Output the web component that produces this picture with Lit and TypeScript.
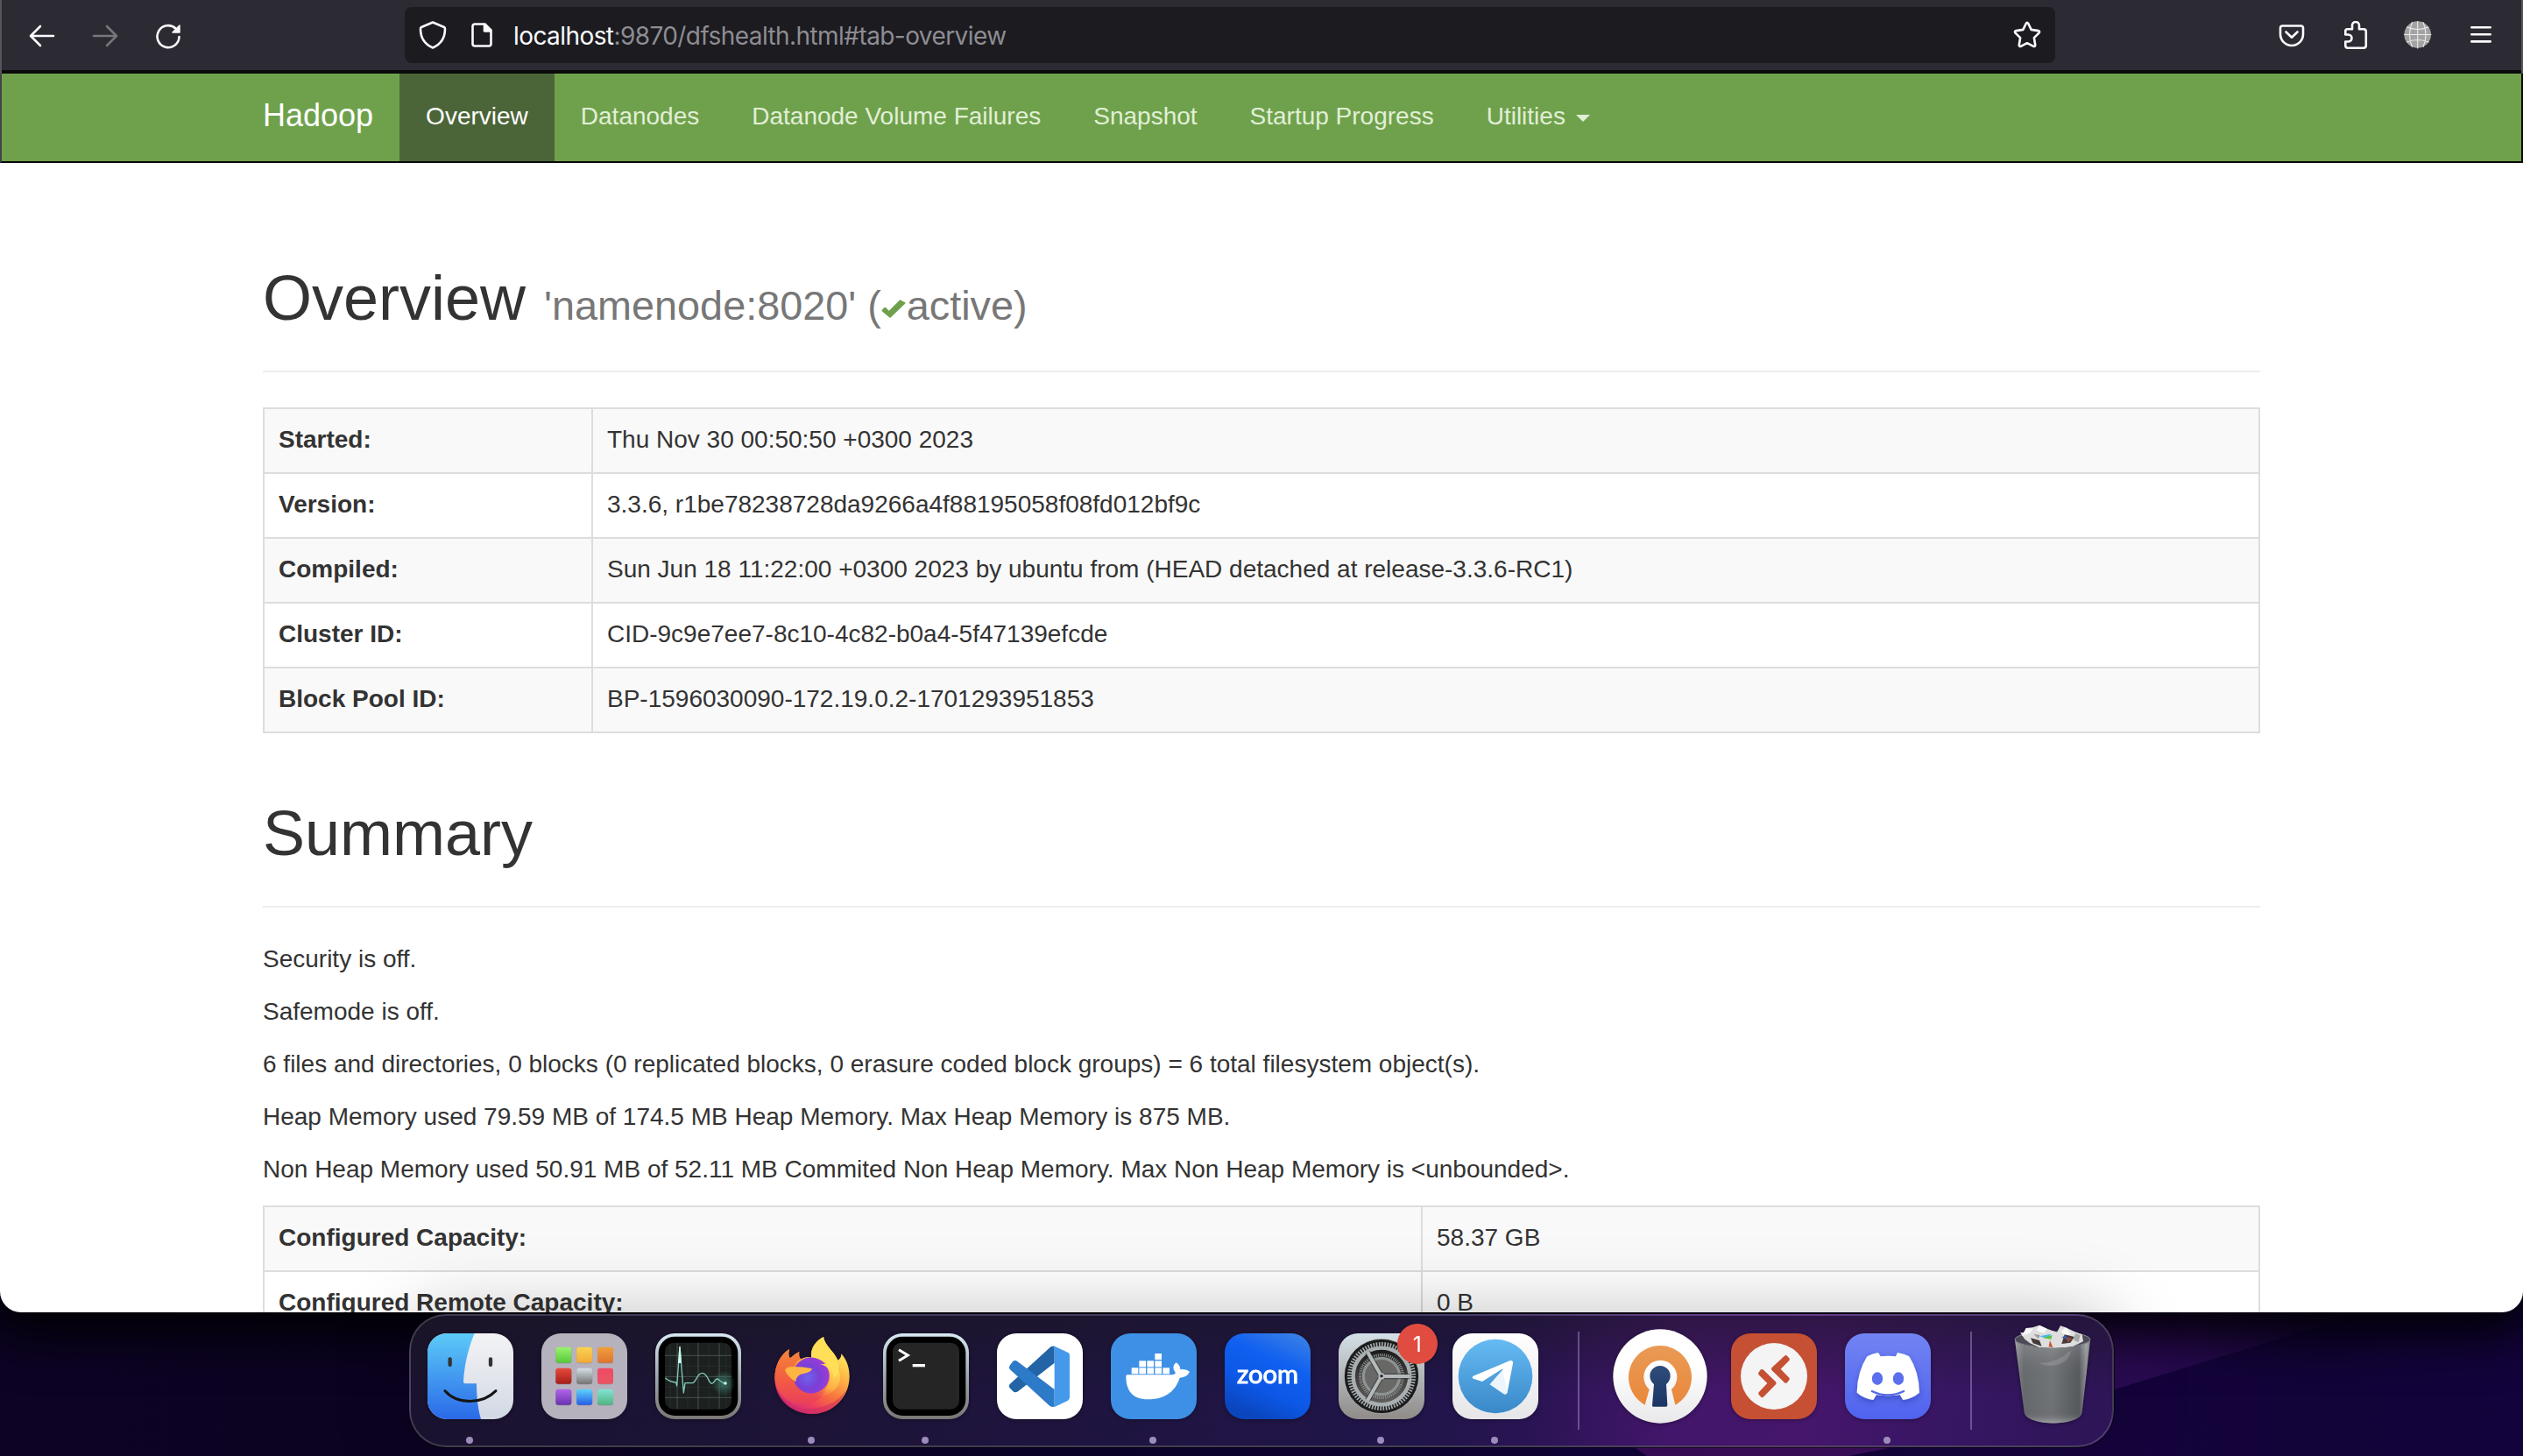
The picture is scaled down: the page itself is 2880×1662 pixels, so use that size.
import { LitElement, html, svg, css } from "lit";
import { customElement, property } from "lit/decorators.js";

const squircle = (fill: string) =>
  svg`<rect x="48" y="60" width="294" height="294" rx="66" fill=${fill} />`;

const glassFrame = (id: string, screen: string) => svg`
  <defs>
    <linearGradient id=${id} x1="0" y1="0" x2="0" y2="1">
      <stop offset="0" stop-color="#d6e8f1" />
      <stop offset="0.5" stop-color="#9fa9b0" />
      <stop offset="1" stop-color="#7b7674" />
    </linearGradient>
  </defs>
  ${squircle(`url(#${id})`)}
  <rect x="59" y="71" width="272" height="271" rx="56" fill="#000" />
  <rect x="81" y="92" width="228" height="228" rx="30" fill=${screen} />`;

const finder = svg`
  <defs>
    <linearGradient id="fb" x1="0" y1="0" x2="0" y2="1"><stop offset="0" stop-color="#5ccbf8" /><stop offset="1" stop-color="#2a69e8" /></linearGradient>
    <linearGradient id="fw" x1="0" y1="0" x2="0" y2="1"><stop offset="0" stop-color="#f3f3f5" /><stop offset="1" stop-color="#d2d9e4" /></linearGradient>
    <clipPath id="fc"><rect x="48" y="60" width="294" height="294" rx="66" /></clipPath>
  </defs>
  <g clip-path="url(#fc)">
    <rect x="48" y="60" width="294" height="294" fill="url(#fw)" />
    <path d="M209 60 C184 118 173 180 171 226 Q171 232 177 232 H216 C216 275 221 320 231 354 H48 V60Z" fill="url(#fb)" />
  </g>
  <path d="M125 148 V168 M264 148 V168" stroke="#333" stroke-width="13" stroke-linecap="round" />
  <path d="M108 257 C150 304 236 304 282 257" fill="none" stroke="#151515" stroke-width="9" stroke-linecap="round" />`;

const padColors = [
  ["#9bf36f", "#56c93a"], ["#f9d350", "#f2a93a"], ["#f0a03c", "#de7430"],
  ["#e94a3c", "#a51f17"], ["#d4e0e6", "#747474"], ["#ee4a63", "#ea5563"],
  ["#b364e8", "#6a34b0"], ["#5fd3fb", "#235fe6"], ["#84e3d4", "#50b583"],
];
const launchpad = svg`
  ${squircle("#b5b2be")}
  ${padColors.map(([a, b], i) => svg`
    <linearGradient id=${"lp" + i} x1="0" y1="0" x2="0" y2="1"><stop offset="0" stop-color=${a} /><stop offset="1" stop-color=${b} /></linearGradient>
    <rect x=${97 + (i % 3) * 71.5} y=${109 + Math.floor(i / 3) * 72} width="54" height="54" rx="9" fill="#000" opacity="0.25" />
    <rect x=${97 + (i % 3) * 71.5} y=${107 + Math.floor(i / 3) * 72} width="54" height="54" rx="9" fill=${`url(#lp${i})`} />`)}`;

const activity = svg`
  ${glassFrame("ag", "#1c201f")}
  <defs><radialGradient id="aw"><stop offset="0" stop-color="#3f8a78" stop-opacity="0.75" /><stop offset="1" stop-color="#3f8a78" stop-opacity="0" /></radialGradient></defs>
  <path d="M123 94 V318 M195 92 V320 M267 94 V318 M81 136 H309 M81 208 H309 M81 280 H309" stroke="#48565300" fill="none" />
  <path d="M123 94 V318 M195 92 V320 M267 94 V318 M81 136 H309 M81 208 H309 M81 280 H309" stroke="#4e5d5a" stroke-width="2.5" fill="none" />
  <path d="M159 92 V320 M231 92 V320 M81 172 H309 M81 244 H309 M99 96 V316 M291 96 V316" stroke="#2c3634" stroke-width="2" fill="none" />
  <ellipse cx="282" cy="231" rx="40" ry="44" fill="url(#aw)" />
  <path d="M82 212 Q96 226 119 228 L122 240 L132 106 L145 264 L150 230 H176 C190 226 190 196 209 196 C228 196 230 232 242 232 C250 232 252 216 260 216 C270 218 272 231 288 231" fill="none" stroke="#7fc9b8" stroke-width="4" stroke-linejoin="round" />
  <path d="M128 160 L132 106 L136 160Z" fill="#dffff6" stroke="#c9f5ea" stroke-width="4" />
  <circle cx="288" cy="231" r="5" fill="#d9f7ef" />`;

const firefox = svg`
  <defs>
    <linearGradient id="ff1" x1="0.85" y1="0.05" x2="0.3" y2="1"><stop offset="0.1" stop-color="#ffe95c" /><stop offset="0.38" stop-color="#fdb044" /><stop offset="0.62" stop-color="#f9703f" /><stop offset="0.82" stop-color="#ee3f5d" /><stop offset="1" stop-color="#cf2a80" /></linearGradient>
    <radialGradient id="ff2" cx="0.4" cy="0.55" r="0.65"><stop offset="0" stop-color="#6f63ee" /><stop offset="0.5" stop-color="#7a3fd6" /><stop offset="1" stop-color="#a33ad8" /></radialGradient>
    <linearGradient id="ff3" x1="0.8" y1="0" x2="0.3" y2="1"><stop offset="0" stop-color="#ffe25a" /><stop offset="0.6" stop-color="#fdae45" /><stop offset="1" stop-color="#f5604a" stop-opacity="0" /></linearGradient>
    <linearGradient id="ff4" x1="0" y1="0" x2="0" y2="1"><stop offset="0" stop-color="#f5863b" /><stop offset="0.5" stop-color="#f3603f" /><stop offset="1" stop-color="#e93f5b" /></linearGradient>
  </defs>
  <path d="M117 114 C113 130 115 138 120 145 Q136 130 151 123 Q148 138 156 148 C172 140 184 140 192 142 C189 108 210 84 234 72 C238 102 268 118 284 152 Q298 140 294 129 C315 150 323 180 323 207 C323 280 265 336 194 336 C124 336 67 282 67 214 C67 170 85 135 117 114Z" fill="url(#ff1)" />
  <path d="M117 114 C113 130 115 138 120 145 Q136 130 151 123 Q148 138 156 148 C130 160 124 190 139 222 C150 270 210 280 244 250 C232 292 176 312 134 300 C96 288 70 252 67 214 C67 170 85 135 117 114Z" fill="url(#ff4)" />
  <path d="M67 218 C72 275 120 318 180 318 C235 318 285 296 310 256 C292 306 246 336 194 336 C124 336 68 286 67 218Z" fill="#c72a5f" opacity="0.5" />
  <circle cx="192" cy="204" r="62" fill="url(#ff2)" />
  <path d="M222 166 Q240 168 250 182 Q262 206 252 232 C238 268 194 286 150 262 C200 296 280 276 290 220 C296 186 276 160 222 166Z" fill="url(#ff3)" />
  <path d="M102 186 Q108 172 134 174 Q160 174 195 181 Q192 194 166 198 Q140 202 139 226 Q112 210 102 186Z" fill="#fdb543" />
  <path d="M192 142 C189 108 210 84 234 72 C238 102 268 118 282 154 C290 180 286 200 270 214 C268 180 244 150 192 142Z" fill="#ffdf58" />`;

const terminal = svg`
  ${glassFrame("tg", "#252525")}
  <path d="M102 116 L133 135 L102 154" fill="none" stroke="#fff" stroke-width="9" />
  <rect x="149" y="165" width="43" height="10" fill="#fff" />`;

const vscode = svg`
  ${squircle("#fff")}
  <path d="M239 104 H245 V161 L120 259 Q109 265 102 257 L91 246 Q87 240 92 234 L230 108 Q234 104 239 104Z" fill="#2264a5" />
  <path d="M92 170 L102 157 Q109 150 118 156 L245 252 V310 Q235 315 226 306 L92 183 Q87 177 92 170Z" fill="#2d7ac8" />
  <path d="M239 104 Q243 103 247 105 L292 126 Q297 129 297 136 V279 Q297 287 291 290 L247 311 Q243 312 239 311 Q245 308 245 301 V114 Q245 107 239 104Z" fill="#4499ea" />`;

const crates = [[119, 178], [145, 178], [172, 178], [199, 178], [226, 178], [145, 154], [172, 154], [199, 154], [199, 129]];
const docker = svg`
  ${squircle("#3d90e6")}
  ${crates.map(([x, y]) => svg`<rect x=${x} y=${y} width="23" height="21" fill="#fff" />`)}
  <path d="M104 202 H258 Q266 202 270 195 Q260 184 263 172 Q265 164 272 160 Q286 170 286 184 Q304 180 318 191 Q310 210 284 212 C268 262 230 286 174 286 C122 286 100 256 100 208 Q100 202 104 202Z" fill="#fff" />`;

const zoom = svg`
  <defs><linearGradient id="zg" x1="0.85" y1="0" x2="0.4" y2="1"><stop offset="0" stop-color="#3a80e6" /><stop offset="0.35" stop-color="#1160f0" /><stop offset="0.7" stop-color="#0c57e6" /><stop offset="1" stop-color="#0a46bd" /></linearGradient></defs>
  ${squircle("url(#zg)")}
  <text x="90" y="230" font-family="Lato, sans-serif" font-weight="400" font-size="88" fill="#fff" stroke="#fff" stroke-width="3" textLength="210" lengthAdjust="spacingAndGlyphs">zoom</text>`;

const settings = svg`
  <defs>
    <linearGradient id="sg" x1="0" y1="0" x2="0" y2="1"><stop offset="0" stop-color="#d5e0e8" /><stop offset="1" stop-color="#8f8b88" /></linearGradient>
    <linearGradient id="si" x1="0" y1="0" x2="0" y2="1"><stop offset="0" stop-color="#181818" /><stop offset="1" stop-color="#63615f" /></linearGradient>
  </defs>
  ${squircle("url(#sg)")}
  <circle cx="195" cy="207" r="128" fill="#1b1c1c" stroke="#c9ced0" stroke-width="2" />
  <circle cx="195" cy="207" r="109" fill="none" stroke="#a6abad" stroke-width="16" stroke-dasharray="5 4.5" />
  <circle cx="195" cy="207" r="97" fill="url(#si)" stroke="#a9afb1" stroke-width="13" />
  <circle cx="195" cy="207" r="73" fill="none" stroke="#8b8f90" stroke-width="10" stroke-dasharray="3.5 3.5" />
  <circle cx="195" cy="207" r="62" fill="#686867" stroke="#8e9292" stroke-width="10" />
  <path d="M195 207 H292 M195 207 L147 124 M195 207 L147 290" stroke="#2a2a2a" stroke-width="19" opacity="0.55" />
  <path d="M195 207 H292 M195 207 L147 124 M195 207 L147 290" stroke="#b4babc" stroke-width="12" />
  <circle cx="195" cy="207" r="11" fill="#b4babc" />
  <circle cx="195" cy="206" r="5" fill="#222" />
  <circle cx="318" cy="96" r="69" fill="#e14c40" />
  <text x="317" y="122" text-anchor="middle" font-family="Inter, sans-serif" font-size="74" fill="#fff">1</text>`;

const telegram = svg`
  <defs>
    <linearGradient id="tw" x1="0" y1="0" x2="0" y2="1"><stop offset="0" stop-color="#fff" /><stop offset="1" stop-color="#e6e6e8" /></linearGradient>
    <linearGradient id="tb" x1="0" y1="0" x2="0" y2="1"><stop offset="0" stop-color="#66bbf3" /><stop offset="1" stop-color="#3988c8" /></linearGradient>
  </defs>
  ${squircle("url(#tw)")}
  <circle cx="195" cy="207" r="127" fill="url(#tb)" />
  <path d="M119 206 L244 154 Q256 150 255 163 L236 262 Q233 272 223 267 L176 235 L219 186 Q223 180 215 184 L150 225 L119 215 Q113 210 119 206Z" fill="#fff" />
  <path d="M176 235 L219 186 L236 262 Q233 272 223 267Z" fill="#dfeefa" opacity="0.6" />`;

const openvpn = svg`
  <defs>
    <linearGradient id="ow" x1="0" y1="0" x2="0" y2="1"><stop offset="0.4" stop-color="#fff" /><stop offset="1" stop-color="#e8e8ea" /></linearGradient>
    <linearGradient id="oo" x1="0" y1="0" x2="0" y2="1"><stop offset="0" stop-color="#e99a55" /><stop offset="1" stop-color="#ea883c" /></linearGradient>
    <linearGradient id="ob" x1="0" y1="0" x2="0" y2="1"><stop offset="0" stop-color="#2f4c7a" /><stop offset="1" stop-color="#1b3665" /></linearGradient>
  </defs>
  <circle cx="195" cy="207" r="161" fill="url(#ow)" />
  <path d="M143 305 A108 108 0 1 1 247 305 L234 252 A57 57 0 1 0 158 252Z" fill="url(#oo)" />
  <path d="M174 234 A35 35 0 1 1 216 234 L220 307 Q220 311 215 311 H172 Q167 311 168 307Z" fill="url(#ob)" />`;

const remoteDesktop = svg`
  ${squircle("#c55033")}
  <circle cx="195" cy="207" r="114" fill="#f4f4f4" />
  <path d="M142 201 Q140 197 143 193 L150 184 Q155 181 159 185 L201 226 Q205 231 201 235 L160 277 Q155 282 151 278 L143 270 Q140 266 143 262 L172 231Z" fill="#c55033" />
  <path d="M247 153 Q250 149 247 145 L240 137 Q236 133 231 137 L188 177 Q184 182 188 187 L231 229 Q236 232 240 229 L247 220 Q250 216 247 212 L218 182Z" fill="#c55033" />`;

const discord = svg`
  <defs>
    <linearGradient id="dg" x1="0" y1="0" x2="0" y2="1"><stop offset="0" stop-color="#7284f2" /><stop offset="1" stop-color="#4f63ee" /></linearGradient>
    <filter id="ds" x="-20%" y="-20%" width="140%" height="150%"><feDropShadow dx="0" dy="10" stdDeviation="10" flood-color="#2d3db8" flood-opacity="0.6" /></filter>
  </defs>
  ${squircle("url(#dg)")}
  <path filter="url(#ds)" d="M124 139 Q140 130 162 126 L170 139 Q196 135 222 139 L228 126 Q252 130 268 139 Q302 192 303 263 Q280 283 247 288 L236 270 Q196 278 156 270 L145 288 Q112 283 89 263 Q90 192 124 139Z" fill="#fff" />
  <path d="M140 258 Q195 284 250 258" fill="none" stroke="#5467e8" stroke-width="6" stroke-linecap="round" />
  <ellipse cx="159" cy="215" rx="18.5" ry="22" fill="#5b6fee" />
  <ellipse cx="231" cy="215" rx="18.5" ry="22" fill="#5b6fee" />`;

const trash = svg`
  <defs>
    <linearGradient id="tr" x1="0" y1="0" x2="1" y2="0"><stop offset="0" stop-color="#8f9295" /><stop offset="0.12" stop-color="#6c6f72" /><stop offset="0.5" stop-color="#76797c" /><stop offset="0.85" stop-color="#5a5d60" /><stop offset="0.95" stop-color="#96999b" /><stop offset="1" stop-color="#6a6d70" /></linearGradient>
    <linearGradient id="ts" x1="0" y1="0" x2="0" y2="1"><stop offset="0" stop-color="#fff" stop-opacity="0.18" /><stop offset="0.5" stop-color="#000" stop-opacity="0.04" /><stop offset="0.85" stop-color="#000" stop-opacity="0.06" /><stop offset="1" stop-color="#fff" stop-opacity="0.3" /></linearGradient>
  </defs>
  <ellipse cx="195" cy="81" rx="129" ry="27" fill="#4c4b57" stroke="#8b8d95" stroke-width="3" />
  <path d="M84 58 L100 80 L118 94 L150 108 L200 112 L262 106 L300 88 L296 64 L270 54 L240 40 L222 34 L210 56 L176 44 L150 32 L126 40 L104 42 L106 56Z" fill="#dedede" />
  <path d="M104 42 L130 44 L116 60 L90 68Z M176 44 L150 32 L140 50 L166 60Z M240 40 L258 62 L240 70 L224 54Z" fill="#f8f8f8" />
  <path d="M120 76 L150 84 L158 104 L128 94Z M236 64 L270 72 L256 92 L226 96Z" fill="#463a3a" />
  <path d="M150 70 L190 62 L178 78Z" fill="#46b8e8" /><path d="M162 76 L194 66 L190 80Z" fill="#5fc23e" />
  <path d="M186 84 L196 108 L182 106Z" fill="#c8552f" /><path d="M240 72 L262 78 L248 92Z" fill="#8f4d3a" /><path d="M226 74 L240 66 L246 80Z" fill="#3e5fae" />
  <path d="M272 60 L290 66 L284 90 L268 84Z" fill="#a7a7a7" /><path d="M130 62 L152 66 L146 78Z" fill="#9a9a9a" />
  <path d="M66 83 C80 118 310 118 324 83 L296 330 C292 380 104 380 98 330Z" fill="url(#tr)" />
  <path d="M66 83 C80 118 310 118 324 83 L296 330 C292 380 104 380 98 330Z" fill="url(#ts)" />
  <path d="M150 160 Q200 168 258 118 Q250 168 190 170 Q160 172 150 160Z" fill="#fff" opacity="0.14" />`;

interface DockItem {
  label: string;
  art?: unknown;
  running?: boolean;
}

const dockItems: DockItem[] = [
  { label: "Finder", art: finder, running: true },
  { label: "Launchpad", art: launchpad },
  { label: "Activity Monitor", art: activity },
  { label: "Firefox", art: firefox, running: true },
  { label: "Terminal", art: terminal, running: true },
  { label: "Visual Studio Code", art: vscode },
  { label: "Docker", art: docker, running: true },
  { label: "Zoom", art: zoom },
  { label: "System Settings", art: settings, running: true },
  { label: "Telegram", art: telegram, running: true },
  { label: "separator" },
  { label: "OpenVPN", art: openvpn },
  { label: "Remote Desktop", art: remoteDesktop },
  { label: "Discord", art: discord, running: true },
  { label: "separator" },
  { label: "Trash", art: trash },
];

@customElement("mac-dock")
export class MacDock extends LitElement {
  static styles = css`
    :host { display: block; }
    .dock {
      box-sizing: border-box;
      width: 1946px;
      height: 152px;
      display: flex;
      padding: 0 3px;
      border: 2px solid rgba(255, 255, 255, 0.17);
      border-radius: 42px;
      background:
        linear-gradient(180deg, rgba(26, 22, 32, 0.5) 0%, rgba(26, 22, 32, 0) 60%),
        linear-gradient(96deg, #1a132f 0%, #1d1438 25%, #21154a 60%, #2a1454 66%, #42166a 74%, #45166c 82%, #361662 91%, #2d1556 100%);
      box-shadow: 0 0 0 1px rgba(0, 0, 0, 0.6), 0 0 84px rgba(0, 0, 0, 0.26);
    }
    .slot { width: 130px; height: 148px; display: flex; flex-direction: column; align-items: center; }
    .art { display: block; width: 130px; height: 130px; overflow: visible; filter: drop-shadow(0 1px 2px rgba(0, 0, 0, 0.35)); }
    .dot { width: 8px; height: 8px; margin: 8px 2px 0 0; border-radius: 50%; background: #9c8cbc; }
    .separator { width: 58px; display: flex; justify-content: center; }
    .line { width: 2px; height: 112px; margin: 18px 0 0 2px; background: rgba(190, 160, 230, 0.42); }
  `;

  render() {
    return html`<div class="dock">
      ${dockItems.map((item) =>
        item.art
          ? html`<div class="slot">
              <svg class="art" viewBox="0 0 390 390" role="img" aria-label=${item.label}>${item.art}</svg>
              ${item.running ? html`<span class="dot"></span>` : null}
            </div>`
          : html`<div class="separator"><span class="line"></span></div>`
      )}
    </div>`;
  }
}

const glyph = (content: unknown, cls = "") =>
  html`<svg class="glyph ${cls}" viewBox="0 0 32 32" width="32" height="32">${content}</svg>`;

@customElement("browser-toolbar")
export class BrowserToolbar extends LitElement {
  static styles = css`
    :host { display: block; }
    .bar {
      box-sizing: border-box;
      height: 84px;
      display: flex;
      align-items: center;
      padding: 0 30px 4px;
      border: 2px solid #56555c;
      border-width: 0 2px;
      background: linear-gradient(#2c2a33 80px, #0a0a0b 80px);
    }
    .group { display: flex; gap: 40px; }
    .glyph { display: block; flex: none; fill: none; stroke: #fbfbfe; stroke-width: 2.6; stroke-linecap: round; stroke-linejoin: round; }
    .dim { stroke: #77767d; }
    .address {
      box-sizing: border-box;
      width: 1884px;
      height: 64px;
      margin: 0 254px;
      padding: 0 16px;
      display: flex;
      align-items: center;
      border-radius: 8px;
      background: #1c1b20;
    }
    .page { margin-left: 24px; }
    .url {
      flex: 1;
      margin-left: 20px;
      padding-top: 1px;
      font: 28px/40px Inter, "Liberation Sans", sans-serif;
      letter-spacing: -0.58px;
      color: #8e8d93;
    }
    .host { color: #fbfbfe; }
  `;

  render() {
    return html`<div class="bar">
      <div class="group">
        ${glyph(svg`<path d="M29 17 H3.5 M14 6 L3 17 L14 28" />`)}
        ${glyph(svg`<path d="M3 17 H28.5 M18 6 L29 17 L18 28" />`, "dim")}
        ${glyph(svg`<path d="M28.5 18 A12.5 12.5 0 1 1 24.5 8.5" /><path d="M29 5 V13 H21Z" fill="#fbfbfe" stroke-width="1.5" />`)}
      </div>
      <div class="address">
        ${glyph(svg`<path d="M16 1.5 L29 7 Q30 7.5 30 9 C30 20 24 27 16 30.5 C8 27 2 20 2 9 Q2 7.5 3 7Z" />`)}
        ${glyph(svg`<path d="M8 3.5 H19.5 L26.5 10.5 V26 Q26.5 28.5 24 28.5 H8 Q5.5 28.5 5.5 26 V6 Q5.5 3.5 8 3.5Z" /><path d="M19 4 V11.5 H26Z" fill="#fbfbfe" />`, "page")}
        <div class="url"><span class="host">localhost</span>:9870/dfshealth.html#tab-overview</div>
        ${glyph(svg`<path d="M14.8 2.8 Q16 0.9 17.2 2.8 L20.7 9.9 L28.7 11.1 Q31 11.7 29.5 13.6 L23.9 19.2 L25.2 27.3 Q25.3 29.5 23.2 28.9 L16 25.2 L8.8 28.9 Q6.7 29.5 6.8 27.3 L8.1 19.2 L2.5 13.6 Q1 11.7 3.3 11.1 L11.3 9.9Z" />`)}
      </div>
      <div class="group">
        ${glyph(svg`<path d="M5.5 5.5 H26.5 Q29 5.5 29 8 V15 A13 13 0 0 1 3 15 V8 Q3 5.5 5.5 5.5Z M9.5 12.5 L16 18.7 L22.5 12.5" />`)}
        ${glyph(svg`<path d="M7.5 9.2 H13 V5 A4 4 0 0 1 21 5 V9.2 H26 Q28.8 9.2 28.8 12 V28 Q28.8 30.7 26 30.7 H8 Q5.3 30.7 5.3 28 V23.5 H8.5 A4 4 0 0 0 8.5 15.5 H5.3 V11.5 Q5.3 9.2 7.5 9.2Z" />`)}
        ${glyph(svg`<circle cx="15.7" cy="15.5" r="15.3" fill="#a3a3a3" stroke="none" /><path d="M15.7 0.5 V31 M0.5 15.5 H31 M9.5 1.5 C5.5 10 5.5 21 9.5 29.5 M22 1.5 C26 10 26 21 22 29.5 M3.5 7 Q15.7 12 28 7 M3.5 24 Q15.7 19 28 24" stroke="#ececec" stroke-width="1.1" />`)}
        ${glyph(svg`<path d="M5.3 7.2 H26.7 M5.3 15.3 H26.7 M5.3 23.4 H26.7" />`)}
      </div>
    </div>`;
  }
}

const tabs = ["Overview", "Datanodes", "Datanode Volume Failures", "Snapshot", "Startup Progress"];

const overviewRows = [
  ["Started:", "Thu Nov 30 00:50:50 +0300 2023"],
  ["Version:", "3.3.6, r1be78238728da9266a4f88195058f08fd012bf9c"],
  ["Compiled:", "Sun Jun 18 11:22:00 +0300 2023 by ubuntu from (HEAD detached at release-3.3.6-RC1)"],
  ["Cluster ID:", "CID-9c9e7ee7-8c10-4c82-b0a4-5f47139efcde"],
  ["Block Pool ID:", "BP-1596030090-172.19.0.2-1701293951853"],
];

const capacityRows = [
  ["Configured Capacity:", "58.37 GB"],
  ["Configured Remote Capacity:", "0 B"],
];

const summaryLines = [
  "Security is off.",
  "Safemode is off.",
  "6 files and directories, 0 blocks (0 replicated blocks, 0 erasure coded block groups) = 6 total filesystem object(s).",
  "Heap Memory used 79.59 MB of 174.5 MB Heap Memory. Max Heap Memory is 875 MB.",
  "Non Heap Memory used 50.91 MB of 52.11 MB Commited Non Heap Memory. Max Non Heap Memory is <unbounded>.",
];

@customElement("striped-table")
export class StripedTable extends LitElement {
  @property({ attribute: false }) rows: string[][] = [];
  @property({ type: Boolean, reflect: true }) wide = false;

  static styles = css`
    :host { display: block; border: 2px solid #ddd; border-bottom: 0; --label: 375px; }
    :host([wide]) { --label: 1322px; }
    .row { display: grid; grid-template-columns: var(--label) 1fr; border-bottom: 2px solid #ddd; line-height: 36px; }
    .row:nth-child(odd) { background: #f9f9f9; }
    .label { padding: 17px 16px 19px; border-right: 2px solid #ddd; font-weight: 700; }
    .value { padding: 17px 16px 19px; }
  `;

  render() {
    return this.rows.map(
      ([label, value]) => html`<div class="row"><div class="label">${label}</div><div class="value">${value}</div></div>`
    );
  }
}

@customElement("app-root")
export class AppRoot extends LitElement {
  static styles = css`
    :host {
      display: flex;
      flex-direction: column;
      align-items: center;
      gap: 2px;
      width: 2880px;
      height: 1662px;
      overflow: hidden;
      background: linear-gradient(90deg, #0d0325 0%, #0c0322 14%, #0c0328 35%, #10043a 60%, #170440 80%, #120338 92%, #13033c 100%);
      color: #333;
      font: 28px/40px "Liberation Sans", Arial, sans-serif;
    }
    .window {
      position: relative;
      width: 2880px;
      height: 1498px;
      flex: none;
      border-radius: 0 0 24px 24px;
      box-shadow: 0 10px 60px 14px #000;
    }
    .view { height: 1498px; overflow: hidden; border-radius: 0 0 24px 24px; background: #fff; }
    .wallpaper { position: absolute; left: 0; top: 1498px; width: 2880px; height: 164px; }
    .nav { box-sizing: border-box; height: 102px; display: flex; padding-left: 298px; border: 2px solid #080808; border-top: 0; border-left-color: #444; background: #6fa14c; color: #e1efd6; line-height: 36px; }
    .brand { padding: 30px 30px 0 0; font-size: 36px; color: #fff; line-height: 36px; }
    .tab { padding: 31px 30px 33px; }
    .active { background: #4b6538; color: #fff; }
    .caret { display: inline-block; margin-left: 4px; border: 8px solid transparent; border-top-color: currentColor; border-bottom: 0; vertical-align: middle; }
    .content { width: 2280px; margin: 0 auto; }
    .header { margin: 115px 0 40px; padding-bottom: 43px; border-bottom: 2px solid #eee; }
    .second { margin-top: 75px; }
    .title { margin: 0; font-size: 72px; font-weight: 400; line-height: 79px; height: 79px; }
    .sub { margin-left: 1px; font-size: 46.8px; line-height: 1; color: #777; }
    .ok { width: 28px; height: 28px; margin-right: 1px; fill: #6fa14c; }
    .line { margin: 0; padding: 1px 0 23px; line-height: 36px; }
    .dock { position: relative; }
  `;

  render() {
    return html`
      <svg class="wallpaper" viewBox="0 0 2880 164">
        <defs>
          <linearGradient id="wedge" gradientUnits="userSpaceOnUse" x1="1840" y1="0" x2="2700" y2="0"><stop offset="0" stop-color="#3c0d5e" /><stop offset="0.3" stop-color="#3f0f62" /><stop offset="0.66" stop-color="#2f0c5a" /><stop offset="1" stop-color="#140438" /></linearGradient>
        </defs>
        <path d="M1700 0 H2700 L2414 88 Q2250 138 2110 164 H1880 L1840 136Z" fill="url(#wedge)" />
      </svg>
      <div class="window">
        <div class="view">
          <browser-toolbar></browser-toolbar>
          <div class="nav">
            <div class="brand">Hadoop</div>
            ${tabs.map((tab, i) => html`<div class="tab ${i === 0 ? "active" : ""}">${tab}</div>`)}
            <div class="tab">Utilities <span class="caret"></span></div>
          </div>
          <div class="content">
            <div class="header">
              <h1 class="title">Overview <span class="sub">'namenode:8020' (<svg class="ok" viewBox="0 0 28 28"><path d="M0.8 18.2 Q0.3 17.3 1 16.5 L3.4 14 Q4.2 13.3 5 14 L8.8 17.7 L21 5.6 Q21.7 5 22.5 5.7 L27.2 8.3 Q27.8 8.9 27.3 9.6 L10.6 25.4 Q9.8 26 9.1 25.3Z" /></svg>active)</span></h1>
            </div>
            <striped-table .rows=${overviewRows}></striped-table>
            <div class="header second"><h1 class="title">Summary</h1></div>
            ${summaryLines.map((line) => html`<p class="line">${line}</p>`)}
            <striped-table wide .rows=${capacityRows}></striped-table>
          </div>
        </div>
      </div>
      <mac-dock class="dock"></mac-dock>
    `;
  }
}
